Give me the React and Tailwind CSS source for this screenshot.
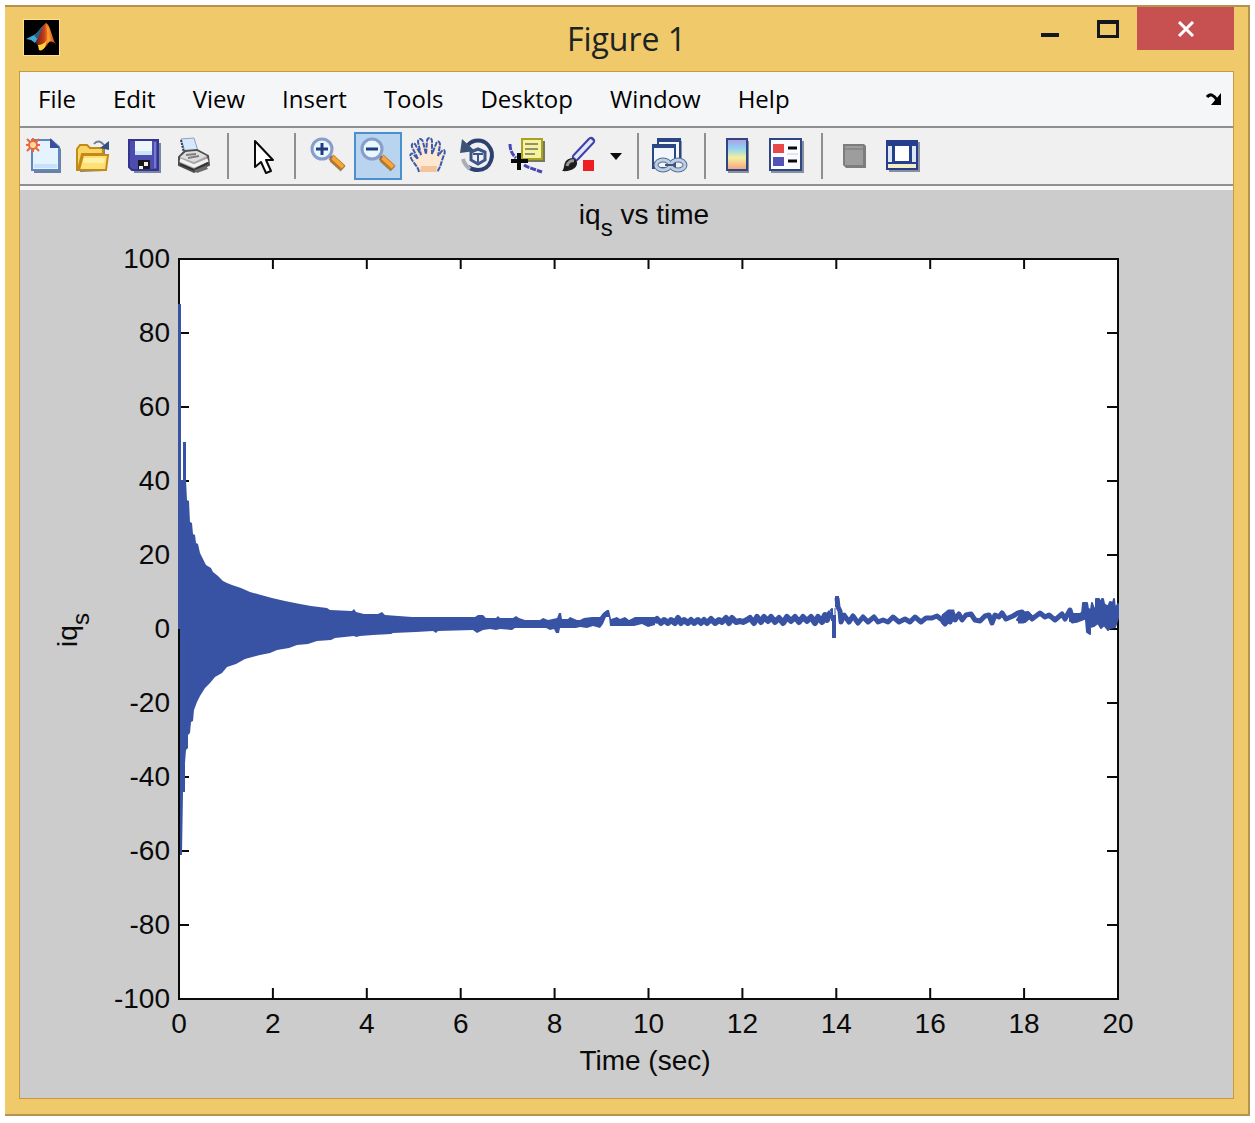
import React from "react";

const MENUS = ["File", "Edit", "View", "Insert", "Tools", "Desktop", "Window", "Help"];

const MatlabLogo = () => (
  <svg viewBox="0 0 35 35" className="w-[35px] h-[35px] bg-black outline outline-[#ffe282]">
    <defs>
      <linearGradient id="peak" x1="0" y1="0" x2="1" y2="0">
        <stop offset="0" stopColor="#5c1a10" />
        <stop offset="0.45" stopColor="#c9401a" />
        <stop offset="0.65" stopColor="#f79a2a" />
        <stop offset="1" stopColor="#d1361c" />
      </linearGradient>
    </defs>
    <path d="M2 19 L10 15 C14 13 16 8 20 5 L16 16 L11 23 L7 20 Z" fill="#3fa9d6" />
    <path d="M10 15 C14 13 16 8 20 5 L17 14 L13 19 Z" fill="#2b5f86" />
    <path d="M11 23 C16 17 18 4 22 3 C26 4 28 18 32 25 C28 20 25 21 23 25 C20 29 17 31 15 30 C15 26 13 23 11 23 Z" fill="url(#peak)" />
    <path d="M14 25 C17 25 20 24 23 20 L21 27 C19 30 17 31 15 30 Z" fill="#ffd23c" />
    <path d="M22 4 C23 10 24 17 23 23 L26 20 C25 14 24 8 22 4 Z" fill="#ff9c2e" />
  </svg>
);

const Icon = ({ children }) => (
  <svg viewBox="0 0 48 48" className="w-12 h-12 shrink-0" aria-hidden="true">
    {children}
  </svg>
);

const NewIcon = () => (
  <Icon>
    <path d="M14 10 H34 L41 17 V41 H14 Z" fill="#6f7f9c" />
    <path d="M12 8 H31 L39 15 V38 H12 Z" fill="#e4f3fd" stroke="#5f86c0" strokeWidth="2" />
    <path d="M30 6 L40 16 H30 Z" fill="#3a4f9b" />
    <path d="M14 32 H37 V36 H14 Z" fill="#c5e2f8" />
    <g stroke="#e8683c" strokeWidth="2">
      <path d="M13 6 V9 M13 17 V20 M6 13 H9 M17 13 H20 M7 7 L10 10 M16 16 L19 19 M19 7 L16 10 M10 16 L7 19" />
      <circle cx="13" cy="13" r="4" fill="#ffd9a0" />
    </g>
  </Icon>
);

const OpenIcon = () => (
  <Icon>
    <path d="M9 17 L11 14 H18 L21 17 H35 V39 L10 40 Z" fill="#7b8096" />
    <path d="M7 17 L10 13 H17 L20 16 H33 V22 H12 L8 38 H7 Z" fill="#f9d568" stroke="#c28a17" strokeWidth="2" />
    <path d="M13 23 H38 L36 38 H9 Z" fill="#ffe073" stroke="#c28a17" strokeWidth="2" />
    <path d="M14 26 H35 L34 31 H13 Z" fill="#fff0a8" />
    <path d="M24 12 C27 8 31 9 34 13" fill="none" stroke="#6c8099" strokeWidth="2" />
    <path d="M39 9 V18 L30 16 Z" fill="#34507e" />
  </Icon>
);

const SaveIcon = () => (
  <Icon>
    <path d="M12 11 H41 V41 H14 Z" fill="#7886a0" />
    <path d="M9 8 H38 V38 H12 L9 35 Z" fill="#4d4db0" stroke="#34348c" strokeWidth="2" />
    <path d="M15 9 H32 V23 H15 Z" fill="#eef6fd" />
    <path d="M15 19 H32 V23 H15 Z" fill="#cfe3f6" />
    <path d="M18 28 H30 V37 H18 Z" fill="#17171c" />
    <path d="M24 30 H28 V34 H24 Z M19 34 H23 V37 H19 Z" fill="#f0f0e6" />
    <path d="M35 10 V36" stroke="#7777cf" strokeWidth="2" />
  </Icon>
);

const PrintIcon = () => (
  <Icon>
    <path d="M11 7 L24 6 L28 19 L16 23 Z" fill="#d7e8fb" stroke="#8aa2c6" />
    <path d="M11 8 L14 21" stroke="#2f3c55" strokeWidth="2" strokeDasharray="2 1" />
    <path d="M9 25 L15 19 L27 18 L38 24 L39 33 L24 40 L9 33 Z" fill="#a8a8a8" stroke="#505050" strokeWidth="2" />
    <path d="M10 25 L16 20 L27 19 L37 24 L24 30 Z" fill="#dedede" />
    <path d="M10 28 L24 34 L38 28" fill="none" stroke="#f2f2f2" strokeWidth="3" />
    <path d="M10 32 L24 38 L38 31" fill="none" stroke="#303030" strokeWidth="2" />
    <path d="M16 23 L26 22 M18 26 L29 24" stroke="#7e7e7e" strokeWidth="2" />
    <path d="M24 38 L36 34 L38 37 L27 41 Z" fill="#6b6b6b" />
  </Icon>
);

const PointerIcon = () => (
  <Icon>
    <path
      d="M18 9 V35 L24 30 L29 41 L34 39 L29 28 H36 Z"
      fill="#fff"
      stroke="#0a0a0a"
      strokeWidth="2"
      strokeLinejoin="round"
    />
  </Icon>
);

const ZoomIcon = ({ plus }) => (
  <Icon>
    <path d="M28 27 L39 37" stroke="#8d8d99" strokeWidth="7" />
    <path d="M27 25 L39 36" stroke="#b8761d" strokeWidth="7" />
    <path d="M27 24 L39 35" stroke="#f6a63a" strokeWidth="4" />
    <path d="M24 23 L28 26" stroke="#6c6f9d" strokeWidth="3" />
    <circle cx="18" cy="17" r="10" fill="#d9f2fb" stroke="#8a9ccb" strokeWidth="3" />
    <circle cx="18" cy="17" r="8" fill="#e6f9ff" />
    <path d="M12 17 H24" stroke="#243a7c" strokeWidth="3" />
    {plus && <path d="M18 11 V23" stroke="#243a7c" strokeWidth="3" />}
  </Icon>
);

const PanIcon = () => (
  <Icon>
    <path
      d="M15 40 C14 34 9 31 7 26 C5 22 8 20 10 23 L14 27 L8 15 C7 11 11 10 12 14 L17 23 L14 10 C14 6 18 6 19 10 L22 22 L23 9 C23 5 28 5 28 9 L28 22 L32 12 C33 8 36 9 36 13 L34 24 L37 20 C40 16 42 19 40 23 C37 30 37 35 33 40"
      fill="#fde8d3"
      stroke="#3a5bad"
      strokeWidth="2"
      strokeDasharray="5 1"
    />
    <path d="M17 34 H33 L32 40 H16 Z" fill="#f5c49c" />
  </Icon>
);

const RotateIcon = () => (
  <Icon>
    <path d="M14 13 C19 7 29 7 34 13 C42 22 37 38 24 38 C20 38 17 37 14 35" fill="none" stroke="#2d4170" strokeWidth="4" />
    <path d="M16 37 C12 34 10 31 9 27" fill="none" stroke="#a9aeb9" strokeWidth="4" />
    <path d="M8 7 L6 21 L21 19 Z" fill="#3d5277" />
    <path d="M17 20 L24 17 L31 20 V28 L24 32 L17 28 Z" fill="#eef1f6" stroke="#3c568c" strokeWidth="3" />
    <path d="M19 22 H29 M24 22 V30" fill="none" stroke="#3c568c" strokeWidth="2" />
  </Icon>
);

const DataCursorIcon = () => (
  <Icon>
    <path d="M19 9 H41 V30 H19 Z" fill="#77775c" />
    <path d="M18 7 H38 V27 H18 Z" fill="#f6f3a0" stroke="#a8a31f" strokeWidth="2" />
    <path d="M21 12 H34 M21 17 H34 M21 22 H31" stroke="#94906c" strokeWidth="2" />
    <path d="M6 12 C6 18 8 22 12 26 M20 33 C25 36 30 37 38 40" fill="none" stroke="#4647b5" strokeWidth="3" strokeDasharray="6 1" />
    <path d="M7 29 H24 M15 21 V38" stroke="#0a0a0a" strokeWidth="4" />
  </Icon>
);

const BrushIcon = () => (
  <Icon>
    <path d="M37 9 L22 25" stroke="#3c3fa8" strokeWidth="8" strokeLinecap="round" />
    <path d="M38 8 L21 26" stroke="#e3e6fa" strokeWidth="4" />
    <path d="M8 39 C11 37 9 31 13 28 C17 25 22 26 23 30 C24 35 18 40 8 39 Z" fill="#1d1d1d" />
    <path d="M13 34 C14 30 17 28 20 29" fill="none" stroke="#9a9a9a" strokeWidth="3" />
    <path d="M29 28 H40 V39 H29 Z" fill="#f01c24" />
  </Icon>
);

const LinkIcon = () => (
  <Icon>
    <path d="M12 9 H35 V30 H12 Z" fill="#8d96a8" />
    <path d="M11 8 H33 V28 H11 Z" fill="#f5f8fc" stroke="#2b4684" strokeWidth="2" />
    <path d="M10 6 H34 V10 H10 Z" fill="#2b4684" />
    <path d="M6 13 H28 V36 H6 Z" fill="#f1f6fd" stroke="#2b4684" strokeWidth="2" />
    <path d="M5 12 H29 V16 H5 Z" fill="#2b4684" />
    <ellipse cx="16" cy="33" rx="7" ry="5" fill="none" stroke="#566d8e" strokeWidth="5" />
    <ellipse cx="31" cy="33" rx="7" ry="5" fill="none" stroke="#566d8e" strokeWidth="5" />
    <ellipse cx="16" cy="33" rx="7" ry="5" fill="none" stroke="#bccfe5" strokeWidth="3" />
    <ellipse cx="31" cy="33" rx="7" ry="5" fill="none" stroke="#bccfe5" strokeWidth="3" />
    <path d="M18 33 H29" stroke="#3f557a" strokeWidth="2" />
  </Icon>
);

const ColorbarIcon = () => (
  <Icon>
    <defs>
      <linearGradient id="jet" x1="0" y1="0" x2="0" y2="1">
        <stop offset="0" stopColor="#b49be0" />
        <stop offset="0.3" stopColor="#8fd3f4" />
        <stop offset="0.6" stopColor="#f4f0a0" />
        <stop offset="1" stopColor="#f7a07c" />
      </linearGradient>
    </defs>
    <path d="M14 9 H35 V41 H14 Z" fill="#8a8f9c" />
    <path d="M13 7 H33 V38 H13 Z" fill="url(#jet)" stroke="#2d4684" strokeWidth="2" />
  </Icon>
);

const LegendIcon = () => (
  <Icon>
    <path d="M7 9 H40 V41 H7 Z" fill="#8a8f9c" />
    <path d="M6 7 H37 V38 H6 Z" fill="#fbfcff" stroke="#2d4684" strokeWidth="2" />
    <path d="M9 12 H20 V21 H9 Z" fill="#e8484a" />
    <path d="M9 25 H20 V34 H9 Z" fill="#5552b6" />
    <path d="M24 16 H33 M24 29 H33" stroke="#0a0a0a" strokeWidth="3" />
    <path d="M23 22 H34" stroke="#dfe5f2" strokeWidth="2" />
  </Icon>
);

const HideToolsIcon = () => (
  <Icon>
    <path d="M12 12 H33 L35 14 V36 H15 L12 33 Z" fill="#7d7d7d" />
    <path d="M14 14 H32 V33 H14 Z" fill="#9d9d9d" />
    <path d="M14 17 H32" stroke="#8a8a8a" strokeWidth="2" />
  </Icon>
);

const ShowToolsIcon = () => (
  <Icon>
    <path d="M8 10 H39 V40 H8 Z" fill="#8a8f9c" />
    <path d="M5 8 H37 V38 H5 Z" fill="#253f8c" />
    <path d="M7 14 H11 V30 H7 Z M31 14 H35 V30 H31 Z" fill="#dfe6f3" />
    <path d="M14 14 H28 V29 H14 Z" fill="#fff" />
    <path d="M7 32 H35 V36 H7 Z" fill="#f4ecc4" />
  </Icon>
);

const ToolButton = ({ label, active, children }) => (
  <button
    type="button"
    aria-label={label}
    aria-pressed={active}
    className={
      active
        ? "flex h-12 w-12 items-center justify-center overflow-hidden bg-[#b9d4ef] outline-2 -outline-offset-2 outline-[#4a8fd0]"
        : "flex h-12 w-12 items-center justify-center"
    }
  >
    {children}
  </button>
);

const Separator = () => (
  <div className="flex w-[15px] justify-center">
    <div className="h-[46px] w-[2px] bg-[#8f8f8f]" />
  </div>
);

const TitleBar = () => (
  <header className="grid h-16 grid-cols-3">
    <div className="pt-[13px] pl-[5px]">
      <MatlabLogo />
    </div>
    <h1 className="text-center font-['Open_Sans',sans-serif] text-[32px] leading-[64px] text-[#1c2422]">
      Figure 1
    </h1>
    <div className="flex items-start justify-end">
      <button type="button" aria-label="Minimize" className="flex h-[43px] w-[58px] items-center justify-center pt-3">
        <span className="h-1 w-[18px] bg-[#14181c]" />
      </button>
      <button type="button" aria-label="Maximize" className="flex h-[43px] w-[58px] items-center justify-center">
        <span className="h-[18px] w-[22px] border-3 border-t-4 border-[#14181c]" />
      </button>
      <button type="button" aria-label="Close" className="flex h-[43px] w-[97px] items-center justify-center bg-[#c75050]">
        <svg viewBox="0 0 18 16" className="h-4 w-[18px]">
          <path d="M2 1 L16 15 M16 1 L2 15" stroke="#fff" strokeWidth="3" />
        </svg>
      </button>
    </div>
  </header>
);

const MenuBar = () => (
  <nav className="flex h-[54px] items-center justify-between bg-[#f5f6f8] pr-[11px] pl-[18px]">
    <div className="flex gap-[37px] font-['Open_Sans',sans-serif] text-2xl text-black">
      {MENUS.map((name) => (
        <button key={name} type="button">
          {name}
        </button>
      ))}
    </div>
    <button type="button" aria-label="Dock figure">
      <svg viewBox="0 0 16 12" className="h-3 w-4">
        <path d="M1 4 C4 0 8 2 11 7" fill="none" stroke="#000" strokeWidth="3" />
        <path d="M15 0 V12 H5 Z" fill="#000" />
      </svg>
    </button>
  </nav>
);

const ToolBar = () => (
  <div className="flex h-[60px] items-center gap-[2px] border-y-2 border-[#8f8f8f] bg-[#f0f0f0]">
    <ToolButton label="New Figure"><NewIcon /></ToolButton>
    <ToolButton label="Open File"><OpenIcon /></ToolButton>
    <ToolButton label="Save Figure"><SaveIcon /></ToolButton>
    <ToolButton label="Print Figure"><PrintIcon /></ToolButton>
    <Separator />
    <ToolButton label="Edit Plot"><PointerIcon /></ToolButton>
    <Separator />
    <ToolButton label="Zoom In"><ZoomIcon plus /></ToolButton>
    <ToolButton label="Zoom Out" active><ZoomIcon /></ToolButton>
    <ToolButton label="Pan"><PanIcon /></ToolButton>
    <ToolButton label="Rotate 3D"><RotateIcon /></ToolButton>
    <ToolButton label="Data Cursor"><DataCursorIcon /></ToolButton>
    <ToolButton label="Brush Data"><BrushIcon /></ToolButton>
    <button type="button" aria-label="Brush options" className="flex h-12 w-6 items-center justify-center">
      <svg viewBox="0 0 12 7" className="h-[7px] w-3">
        <path d="M0 0 H12 L6 7 Z" fill="#0a0a0a" />
      </svg>
    </button>
    <Separator />
    <ToolButton label="Link Plot"><LinkIcon /></ToolButton>
    <Separator />
    <ToolButton label="Insert Colorbar"><ColorbarIcon /></ToolButton>
    <ToolButton label="Insert Legend"><LegendIcon /></ToolButton>
    <Separator />
    <ToolButton label="Hide Plot Tools"><HideToolsIcon /></ToolButton>
    <ToolButton label="Show Plot Tools"><ShowToolsIcon /></ToolButton>
  </div>
);

// chart space: 47 units per second, 3.7 units per amp
const X0 = 159;
const X1 = 1098;
const TOP = 69;
const BOTTOM = 809;
const ZERO = 439;

const X_TICKS = [0, 2, 4, 6, 8, 10, 12, 14, 16, 18, 20];
const Y_TICKS = [100, 80, 60, 40, 20, 0, -20, -40, -60, -80, -100];

const tx = (t) => X0 + ((X1 - X0) * t) / 20;
const ty = (v) => ZERO - (v * (BOTTOM - TOP)) / 200;

const UPPER =
  "158,114 161,114 161,290 163,290 163,252 166,252 166,290 167,310 169,311 170,332 172,333 173,344 175,345 176,353 178,354 180,363 183,369 186,375 191,378 193,382 198,386 203,391 207,393 212,395 221,398 230,402 241,405 252,408 265,411 280,414 291,416 307,418 310,420 332,421 334,419 336,422 344,424 358,424 362,422 365,425 392,427 455,427 458,425 463,425 466,428 476,428 478,426 480,428 493,428 496,426 499,428 505,430 520,430 523,428 528,430 537,428 539,423 541,423 542,429 548,429 550,427 557,430 560,430 564,428 572,427 580,427 583,423 587,420 589,420 591,429 597,427 600,429 605,427 609,430 615,427 635,427";

const LOWER =
  "635,435 628,437 622,434 614,436 610,436 600,436 590,436 589,427 586,427 583,434 580,438 573,436 567,438 560,437 556,438 548,438 540,438 539,443 536,443 534,439 530,440 526,438 515,438 510,438 495,438 492,440 480,439 476,440 470,439 463,440 457,443 453,440 418,441 416,443 413,441 396,442 373,443 371,444 353,445 340,446 336,447 334,446 315,448 311,450 297,451 288,454 277,455 269,458 257,460 250,463 240,465 225,469 216,474 207,477 202,483 195,487 190,493 185,498 180,506 177,512 174,520 173,531 171,532 170,543 168,545 168,558 166,560 165,573 165,602 163,602 162,665 159,665";

const RIPPLE =
  "634,432 637,429 641,433 644,430 648,433 651,430 655,433 658,428 661,433 664,430 668,433 671,430 674,433 678,430 681,433 684,430 687,433 691,429 695,433 699,430 702,432 706,428 709,433 712,428 716,432 720,431 723,432 727,430 730,428 734,433 737,427 741,432 744,427 748,431 751,427 755,432 759,428 763,433 767,427 771,431 775,427 779,432 783,427 787,431 791,427 795,433 798,427 802,432 805,425 807,430 809,425 811,422";

const TAIL =
  "817,408 818,417 820,421 821,432 824,425 829,432 833,426 838,433 843,427 848,432 854,427 858,432 863,430 868,432 873,427 879,432 885,429 890,432 895,427 901,432 906,428 912,428 917,426 922,430 925,434 928,424 930,432 933,424 935,430 939,424 942,430 946,425 951,424 955,430 960,431 965,426 969,425 972,433 975,425 979,427 982,423 986,429 993,426 998,423 1002,422 1004,425";

const TAIL_END =
  "998,431 1003,431 1008,424 1012,429 1020,423 1025,427 1029,425 1035,430 1042,424 1045,429 1050,420 1053,431 1060,428 1065,422";

const BURST =
  "1062,424 1063,413 1067,413 1068,419 1071,420 1072,413 1074,419 1076,418 1076,409 1079,409 1080,414 1082,409 1083,409 1084,414 1088,417 1090,412 1093,413 1094,409 1095,419 1098,414 1098,428 1095,437 1090,438 1088,440 1084,435 1081,438 1078,433 1074,436 1070,437 1070,444 1067,442 1066,430";

const Figure = () => (
  <svg
    viewBox="0 0 1213 908"
    className="block h-auto w-full bg-[#cccccc] font-['Liberation_Sans',Arial,sans-serif] text-[28px]"
    role="img"
    aria-label="iqs vs time"
  >
    <rect x={X0} y={TOP} width={X1 - X0} height={BOTTOM - TOP} fill="#fff" stroke="#0a0a0a" strokeWidth="2" />

    <g stroke="#0a0a0a" strokeWidth="2">
      {X_TICKS.slice(1, -1).map((t) => (
        <path key={t} d={`M${tx(t)} ${TOP} v10 M${tx(t)} ${BOTTOM} v-11`} />
      ))}
      {Y_TICKS.slice(1, -1).map((v) => (
        <path key={v} d={`M${X0} ${ty(v)} h10 M${X1} ${ty(v)} h-11`} />
      ))}
    </g>

    <g fill="none" stroke="#3953a4" strokeLinejoin="round">
      <polygon points={`${UPPER} ${LOWER} 160,440 158,440`} fill="#3953a4" stroke="none" />
      <polyline points={RIPPLE} strokeWidth="6" />
      <path d="M810 421 L812 419 V431" strokeWidth="2" />
      <path d="M814 448 V425 M817 406 V417" strokeWidth="4" />
      <path d="M815 430 V418" strokeWidth="1" />
      <polyline points={TAIL} strokeWidth="5" />
      <polyline points={TAIL_END} strokeWidth="5" />
      <polygon points="997,430 1001,423 1008,422 1012,426 1005,432" fill="#3953a4" strokeWidth="2" />
      <polygon points="1050,424 1060,424 1064,421 1064,429 1056,432 1050,431" fill="#3953a4" strokeWidth="2" />
      <polygon points="922,425 928,420 934,420 934,430 926,435 922,434" fill="#3953a4" strokeWidth="1" />
      <polygon points={BURST} fill="#3953a4" strokeWidth="2" />
    </g>
    <path d={`M${X0} ${ZERO} V${BOTTOM}`} stroke="#0a0a0a" strokeWidth="2" />

    <g fill="#0a0a0a">
      {X_TICKS.map((t) => (
        <text key={t} x={tx(t)} y="843" textAnchor="middle">
          {t}
        </text>
      ))}
      {Y_TICKS.map((v) => (
        <text key={v} x="150" y={ty(v) + 9} textAnchor="end">
          {v}
        </text>
      ))}
      <text x="624" y="34" textAnchor="middle">
        iq
        <tspan dy="12" className="text-2xl">s</tspan>
        <tspan dy="-12"> vs time</tspan>
      </text>
      <text x="625" y="880" textAnchor="middle">
        Time (sec)
      </text>
      <text transform="translate(57 440) rotate(-90)" textAnchor="middle">
        iq
        <tspan dy="12" className="text-2xl">s</tspan>
      </text>
    </g>
  </svg>
);

const App = () => {
  return (
    <div className="min-h-screen bg-white p-[5px]">
      <div className="border-y-2 border-r-2 border-[#b3934d] bg-[#f0c96a] px-[14px] pb-[15px]">
        <TitleBar />
        <main className="border border-[#c99a3c]">
          <MenuBar />
          <ToolBar />
          <div className="h-1 bg-[#f7f7f7]" />
          <Figure />
        </main>
      </div>
    </div>
  );
};

export default App;
